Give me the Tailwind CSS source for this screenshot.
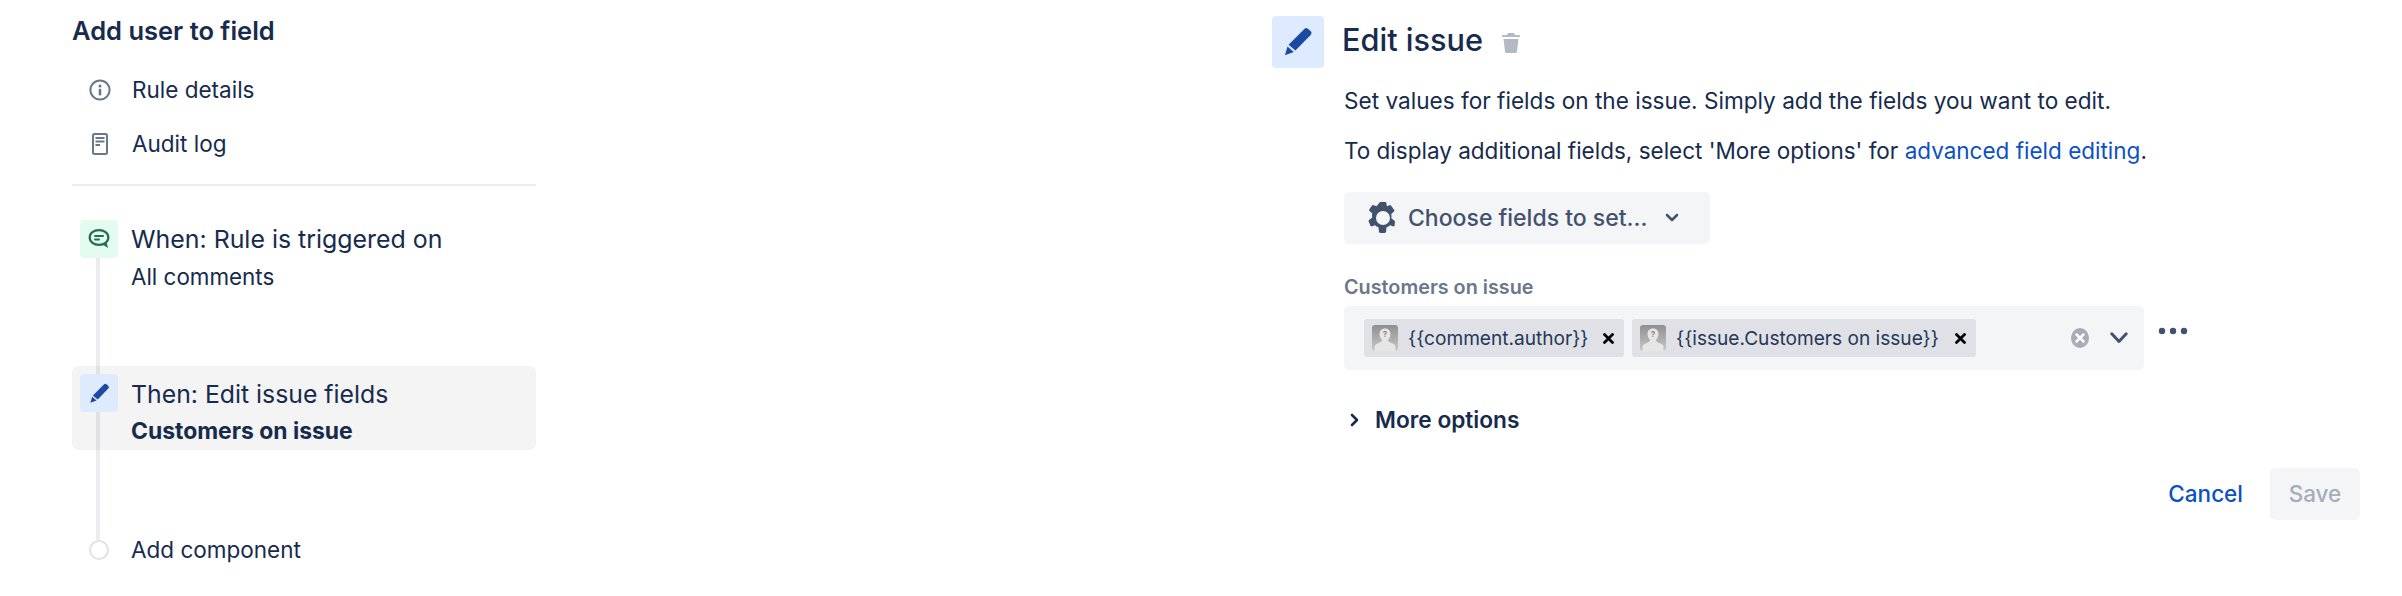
<!DOCTYPE html>
<html lang="en">
<head>
<meta charset="utf-8">
<script src="https://cdn.jsdelivr.net/npm/@tailwindcss/browser@4"></script>
<title>Edit issue</title>
</head>
<body class="bg-white">
<div class="flex h-[596px] w-[2402px] overflow-hidden font-['Inter',sans-serif] text-[#172b4d]">
  <!-- Left column -->
  <aside class="relative ml-[72px] w-[464px] shrink-0 pt-4">
    <h2 class="h-[30px] text-[25.500px] leading-[30px] font-semibold whitespace-nowrap">Add user to field</h2>
    <nav class="mt-[17px] flex flex-col text-[22.500px]">
      <a class="flex h-[54px] items-center">
        <span class="flex w-[60px] justify-center">
          <svg class="ml-[-5px]" width="22" height="22" viewBox="0 0 22 22" fill="none"><circle cx="11" cy="11" r="9.6" stroke="#6b778c" stroke-width="2"/><circle cx="11" cy="7" r="1.5" fill="#6b778c"/><rect x="9.7" y="9.8" width="2.6" height="6.6" rx="1" fill="#6b778c"/></svg>
        </span>
        <span>Rule details</span>
      </a>
      <a class="flex h-[54px] items-center">
        <span class="flex w-[60px] justify-center">
          <svg class="ml-[-5px]" width="16" height="22" viewBox="0 0 16 22" fill="none"><rect x="1" y="1" width="14" height="20" rx="1.5" stroke="#6b778c" stroke-width="2"/><rect x="3.5" y="4" width="9" height="2" fill="#6b778c"/><rect x="3.5" y="7.5" width="9" height="2" fill="#6b778c"/><rect x="3.5" y="11" width="4.5" height="2" fill="#6b778c"/></svg>
        </span>
        <span>Audit log</span>
      </a>
    </nav>
    <div class="mt-[13px] h-0.5 bg-[#ebecf0]"></div>

    <!-- Timeline -->
    <div class="relative mt-[26px]">
      <div class="absolute top-[44px] left-[24px] h-[284px] w-1 bg-[#ebecf0]"></div>

      <div class="relative h-[84px] pt-2 pl-2">
        <div class="flex gap-[14px]">
          <div class="flex h-[38px] w-[38px] shrink-0 items-center justify-center rounded-[4px] bg-[#e3fcef]">
            <svg width="22" height="20" viewBox="0 0 22 20" fill="none"><path d="M11 1.200c5.200 0 9.300 3 9.300 7.300s-4.100 7.300-9.300 7.300c-5.200 0-9.300-3-9.300-7.300S5.800 1.200 11 1.200z" stroke="#216e4e" stroke-width="2.200"/><path d="M14.500 15.500l5.500 3.500-1.500-6z" fill="#216e4e"/><rect x="6" y="6" width="10" height="2" rx="1" fill="#216e4e"/><rect x="6" y="9.500" width="6" height="2" rx="1" fill="#216e4e"/></svg>
          </div>
          <div class="ml-[-1px] pt-[2px]">
            <div class="h-[42px] text-[24.900px] leading-[34px] whitespace-nowrap">When: Rule is triggered on</div>
            <div class="text-[22.400px] leading-[26px]">All comments</div>
          </div>
        </div>
      </div>

      <div class="relative mt-[70px] h-[84px] rounded-[6px] bg-black/[0.045] pt-2 pl-2">
        <div class="flex gap-[14px]">
          <div class="flex h-[38px] w-[38px] shrink-0 items-center justify-center rounded-[4px] bg-[#deebff]">
            <svg width="21" height="21" viewBox="0 0 20 20"><path d="M14.400 1.200a1.600 1.600 0 0 1 2.200 0l1.900 1.700a1.600 1.600 0 0 1 .1 2.200L8.300 15.700 3.700 11.800z" fill="#1c4aa3"/><path d="M3 13l4.200 3.600L1.300 18.800z" fill="#1c4aa3"/></svg>
          </div>
          <div class="ml-[-1px] pt-[3px]">
            <div class="h-[41px] text-[24.800px] leading-[34px] whitespace-nowrap">Then: Edit issue fields</div>
            <div class="text-[22.900px] leading-[26px] font-bold whitespace-nowrap">Customers on issue</div>
          </div>
        </div>
      </div>

      <div class="relative mt-[80px] flex h-10 items-center">
        <span class="ml-[17px] block h-5 w-5 rounded-full border-[2.500px] border-[#dfe1e6] bg-white"></span>
        <span class="ml-[22px] text-[22.500px]">Add component</span>
      </div>
    </div>
  </aside>

  <!-- Right panel -->
  <main class="mr-[42px] ml-auto w-[1088px] shrink-0 pt-4">
    <header class="flex h-[52px] items-center">
      <div class="flex h-[52px] w-[52px] shrink-0 items-center justify-center rounded-[4px] bg-[#deebff]">
        <svg width="30" height="30" viewBox="0 0 20 20"><path d="M14.400 1.200a1.600 1.600 0 0 1 2.200 0l1.900 1.700a1.600 1.600 0 0 1 .1 2.200L8.300 15.700 3.700 11.800z" fill="#1c4aa3"/><path d="M3 13l4.200 3.600L1.300 18.800z" fill="#1c4aa3"/></svg>
      </div>
      <h1 class="mt-[-3px] ml-[18px] text-[30.700px] leading-none font-medium whitespace-nowrap">Edit issue</h1>
      <svg class="mt-[2px] ml-[19px]" width="18" height="20" viewBox="0 0 18 20"><path d="M6 0h6l1 2h4a1 1 0 0 1 1 1v1H0V3a1 1 0 0 1 1-1h4z" fill="#b3bac5"/><path d="M1.500 6h15L15 18.500a1.500 1.500 0 0 1-1.500 1.500h-9A1.500 1.500 0 0 1 3 18.500z" fill="#b3bac5"/></svg>
    </header>

    <div class="ml-[72px] w-[1016px]">
      <p class="mt-5 text-[22.600px] leading-[26px] whitespace-nowrap">Set values for fields on the issue. Simply add the fields you want to edit.</p>
      <p class="mt-6 text-[22.500px] leading-[26px] whitespace-nowrap">To display additional fields, select 'More options' for <a class="text-[#0b50c4]">advanced field editing</a>.</p>

      <button class="mt-[28px] flex h-[52px] w-[366px] items-center rounded-[5px] bg-[#f4f5f7] pl-6 text-[23px] font-medium whitespace-nowrap text-[#42526e]">
        <svg width="30" height="32" viewBox="0 0 30 32"><path fill="#42526e" fill-rule="evenodd" d="M12 0h6l1 4.300 3-1.200 1 .5 3.500 5-.5 1-2.700 2.300c.3 1.400.3 2.900 0 4.300l3.200 2.500.5 1L26.500 24l-1 .5-3.500-1.200c-1 .9-2.200 1.600-3.500 2L18 30l-1 1h-5l-1-1-.5-4.700c-1.300-.4-2.500-1.100-3.500-2l-3.500 1.200-1-.5L.5 19l.5-1 3.200-2.500c-.3-1.400-.3-2.900 0-4.300L1.500 8.900 1 8l3-4.600 1-.4 3.500 1.300zM15 9a7 7 0 1 0 0 14 7 7 0 0 0 0-14z"/></svg>
        <span class="ml-[10px]">Choose fields to set...</span>
        <svg class="ml-[18px]" width="14" height="10" viewBox="0 0 14 10" fill="none"><path d="M2 2l5 5 5-5" stroke="#42526e" stroke-width="2.500" stroke-linecap="round" stroke-linejoin="round"/></svg>
      </button>

      <label class="mt-[31px] block text-[19.800px] leading-6 font-semibold text-[#6b778c]">Customers on issue</label>

      <div class="mt-[7px] flex items-start">
        <div class="flex h-16 w-[800px] items-center rounded-[5px] bg-[#f4f5f7] pr-[16px] pl-5 text-[#253858]">
          <div class="flex h-[38px] w-[260px] items-center rounded-[3px] bg-[#dfe1e6] pl-2">
            <svg class="shrink-0" width="26" height="26" viewBox="0 0 26 26"><defs><linearGradient id="av" x1="0" y1="0" x2="0" y2="1"><stop offset="0" stop-color="#8f8f8f"/><stop offset="1" stop-color="#c8c8c8"/></linearGradient></defs><rect width="26" height="26" rx="3" fill="url(#av)"/><path d="M13 3.500c3.700 0 5.500 2.600 5.500 5.500 0 2.500-1.200 4.800-2.700 6 0 1.500 2 2.300 4.700 3.500 2 .9 3 1.800 3 3.500V26H2.500v-4c0-1.700 1-2.600 3-3.500 2.700-1.200 4.700-2 4.700-3.500-1.500-1.200-2.700-3.500-2.700-6 0-2.900 1.800-5.500 5.500-5.500z" fill="#e6e6e6"/><text x="13" y="12" font-size="8" font-weight="700" text-anchor="middle" fill="#8a8a8a" font-family="Inter">?</text></svg>
            <span class="ml-[10px] text-[19.100px] whitespace-nowrap">{{comment.author}}</span>
            <svg class="mr-[10px] ml-auto" width="11" height="11" viewBox="0 0 11 11"><path d="M1.500 1.500l8 8M9.500 1.500l-8 8" stroke="#000" stroke-width="2.800" stroke-linecap="round"/></svg>
          </div>
          <div class="ml-2 flex h-[38px] w-[344px] items-center rounded-[3px] bg-[#dfe1e6] pl-2">
            <svg class="shrink-0" width="26" height="26" viewBox="0 0 26 26"><rect width="26" height="26" rx="3" fill="url(#av)"/><path d="M13 3.500c3.700 0 5.500 2.600 5.500 5.500 0 2.500-1.200 4.800-2.700 6 0 1.500 2 2.300 4.700 3.500 2 .9 3 1.800 3 3.500V26H2.500v-4c0-1.700 1-2.600 3-3.500 2.700-1.200 4.700-2 4.700-3.500-1.500-1.200-2.700-3.500-2.700-6 0-2.900 1.800-5.500 5.500-5.500z" fill="#e6e6e6"/><text x="13" y="12" font-size="8" font-weight="700" text-anchor="middle" fill="#8a8a8a" font-family="Inter">?</text></svg>
            <span class="ml-[10px] text-[19.100px] whitespace-nowrap">{{issue.Customers on issue}}</span>
            <svg class="mr-[10px] ml-auto" width="11" height="11" viewBox="0 0 11 11"><path d="M1.500 1.500l8 8M9.500 1.500l-8 8" stroke="#000" stroke-width="2.800" stroke-linecap="round"/></svg>
          </div>
          <svg class="ml-auto" width="18" height="20" viewBox="0 0 18 20"><ellipse cx="9" cy="10" rx="9" ry="10" fill="#a5adba"/><path d="M5.500 6.500l7 7M12.500 6.500l-7 7" stroke="#fff" stroke-width="2.500" stroke-linecap="round"/></svg>
          <svg class="ml-[21px]" width="18" height="12" viewBox="0 0 18 12" fill="none"><path d="M1.800 1.800L9 9.500l7.200-7.700" stroke="#42526e" stroke-width="3" stroke-linecap="round" stroke-linejoin="round"/></svg>
        </div>
        <svg class="mt-5 ml-[14px]" width="30" height="10" viewBox="0 0 30 10"><circle cx="4" cy="5" r="3.200" fill="#42526e"/><circle cx="15" cy="5" r="3.200" fill="#42526e"/><circle cx="26" cy="5" r="3.200" fill="#42526e"/></svg>
      </div>

      <button class="mt-[34px] flex h-8 items-center text-[22.700px] font-semibold whitespace-nowrap">
        <svg class="ml-[6px]" width="10" height="14" viewBox="0 0 10 14" fill="none"><path d="M2 2l5 5-5 5" stroke="#172b4d" stroke-width="2.600" stroke-linecap="round" stroke-linejoin="round"/></svg>
        <span class="ml-[15px]">More options</span>
      </button>

      <div class="mt-[32px] flex items-center justify-end">
        <button class="text-[22.500px] font-medium text-[#0b50c4]">Cancel</button>
        <button class="ml-[27px] h-[52px] w-[90px] rounded-[5px] bg-[#f4f5f7] text-[22.500px] font-medium text-[#a5adba]">Save</button>
      </div>
    </div>
  </main>
</div>
</body>
</html>
